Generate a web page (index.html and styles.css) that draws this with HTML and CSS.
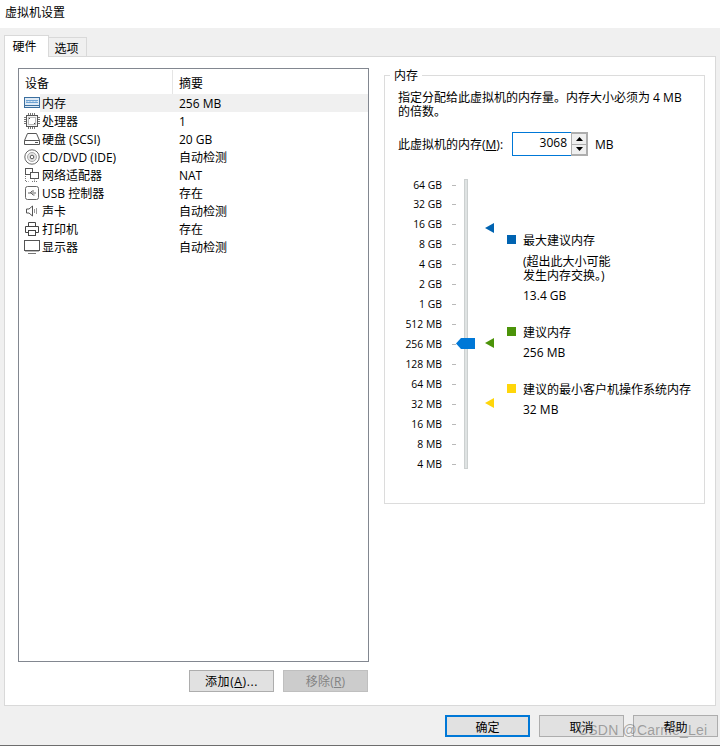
FILE: index.html
```html
<!DOCTYPE html>
<html lang="zh-CN">
<head>
<meta charset="utf-8">
<title>虚拟机设置</title>
<link rel="stylesheet" href="styles.css">
</head>
<body>
<div class="window">
  <div class="titlebar">虚拟机设置</div>
  <div class="content">
    <div class="tabs">
      <div class="tab active">硬件</div>
      <div class="tab">选项</div>
    </div>
    <div class="panel">
      <div class="left">
        <div class="list">
          <div class="list-head">
            <div class="col-a">设备</div>
            <div class="col-b">摘要</div>
          </div>
          <div class="row selected">
            <svg class="ico" viewBox="0 0 16 16"><rect x="0.500" y="2.500" width="15" height="10" fill="#dfeaf5" stroke="#3b6f9f"/><path d="M2 5.500h12M2 7.500h12" stroke="#6fa3d2"/><path d="M2 6.500h12" stroke="#b5d0ea" stroke-dasharray="2 1"/><path d="M1 10.500h14" stroke="#3b6f9f"/></svg>
            <span class="name">内存</span><span class="val">256 MB</span>
          </div>
          <div class="row">
            <svg class="ico" viewBox="0 0 16 16"><rect x="2.500" y="2.500" width="11" height="11" fill="#f4f4f4" stroke="#555"/><rect x="4.500" y="4.500" width="7" height="7" fill="#fff" stroke="#bbb"/><path d="M0 4.500h2M0 6.500h2M0 8.500h2M0 10.500h2M14 4.500h2M14 6.500h2M14 8.500h2M14 10.500h2M4.500 0v2M6.500 0v2M8.500 0v2M10.500 0v2M4.500 14v2M6.500 14v2M8.500 14v2M10.500 14v2" stroke="#777"/><path d="M5 5h1v1H5zM10 10h1v1h-1z" fill="#444"/></svg>
            <span class="name">处理器</span><span class="val">1</span>
          </div>
          <div class="row">
            <svg class="ico" viewBox="0 0 16 16"><path d="M3.500 2.500h9l3 7v4h-15v-4z" fill="#fff" stroke="#555"/><path d="M0.500 9.500h15" stroke="#555"/><path d="M11 11.500h3" stroke="#555"/></svg>
            <span class="name">硬盘 (SCSI)</span><span class="val">20 GB</span>
          </div>
          <div class="row">
            <svg class="ico" viewBox="0 0 16 16"><circle cx="8" cy="8" r="7.200" fill="#fff" stroke="#666"/><circle cx="8" cy="8" r="4.500" fill="#e4e4e4" stroke="#aaa"/><circle cx="8" cy="8" r="1.800" fill="#fff" stroke="#555"/></svg>
            <span class="name">CD/DVD (IDE)</span><span class="val">自动检测</span>
          </div>
          <div class="row">
            <svg class="ico" viewBox="0 0 16 16"><rect x="1.500" y="1.500" width="7" height="6" fill="#fff" stroke="#555"/><rect x="6.500" y="5.500" width="8" height="6" fill="#fff" stroke="#555"/><path d="M10.500 11.500v3M8 14.500h5M1.500 9v5.500h3" stroke="#777" fill="none" stroke-dasharray="1 1"/></svg>
            <span class="name">网络适配器</span><span class="val">NAT</span>
          </div>
          <div class="row">
            <svg class="ico" viewBox="0 0 16 16"><rect x="1.500" y="1.500" width="13" height="13" rx="2" fill="#fff" stroke="#666"/><path d="M4 8h8M6 8l2-2h2M7 8l2 2h1.500" stroke="#666" fill="none"/></svg>
            <span class="name">USB 控制器</span><span class="val">存在</span>
          </div>
          <div class="row">
            <svg class="ico" viewBox="0 0 16 16"><path d="M2.500 6h2.500l3.500-3v10l-3.500-3h-2.500z" fill="#fff" stroke="#555"/><path d="M10.500 6v4M12.500 5v6" stroke="#999" fill="none"/></svg>
            <span class="name">声卡</span><span class="val">自动检测</span>
          </div>
          <div class="row">
            <svg class="ico" viewBox="0 0 16 16"><path d="M4.500 5.500v-4h7v4M4.500 11.500h-3v-6h13v6h-3" fill="#fff" stroke="#444"/><rect x="4.500" y="9.500" width="7" height="5" fill="#fff" stroke="#444"/></svg>
            <span class="name">打印机</span><span class="val">存在</span>
          </div>
          <div class="row">
            <svg class="ico" viewBox="0 0 16 16"><rect x="0.500" y="1.500" width="15" height="10" fill="#fff" stroke="#555"/><path d="M4 14.500h8" stroke="#777"/><path d="M1 12.500h14" stroke="#bbb"/></svg>
            <span class="name">显示器</span><span class="val">自动检测</span>
          </div>
        </div>
        <div class="list-actions">
          <div class="btn small">添加(<u>A</u>)...</div>
          <div class="btn small disabled">移除(<u>R</u>)</div>
        </div>
      </div>
      <div class="group">
        <div class="legend">内存</div>
        <p class="desc">指定分配给此虚拟机的内存量。内存大小必须为 4 MB<br>的倍数。</p>
        <div class="mem-row">
          <span class="mem-label">此虚拟机的内存(<u>M</u>):</span>
          <div class="mem-input">3068</div>
          <div class="spin">
            <div class="spin-btn"><svg viewBox="0 0 7 4" class="arrow"><path d="M3.500 0L7 4H0z"/></svg></div>
            <div class="spin-btn"><svg viewBox="0 0 7 4" class="arrow"><path d="M0 0h7L3.500 4z"/></svg></div>
          </div>
          <span class="mem-unit">MB</span>
        </div>
        <div class="chart">
          <div class="scale">
            <div class="track"></div>
            <div class="tick-row"><span>64 GB</span><i></i></div>
            <div class="tick-row"><span>32 GB</span><i></i></div>
            <div class="tick-row"><span>16 GB</span><i></i></div>
            <div class="tick-row"><span>8 GB</span><i></i></div>
            <div class="tick-row"><span>4 GB</span><i></i></div>
            <div class="tick-row"><span>2 GB</span><i></i></div>
            <div class="tick-row"><span>1 GB</span><i></i></div>
            <div class="tick-row"><span>512 MB</span><i></i></div>
            <div class="tick-row"><span>256 MB</span><i></i></div>
            <div class="tick-row"><span>128 MB</span><i></i></div>
            <div class="tick-row"><span>64 MB</span><i></i></div>
            <div class="tick-row"><span>32 MB</span><i></i></div>
            <div class="tick-row"><span>16 MB</span><i></i></div>
            <div class="tick-row"><span>8 MB</span><i></i></div>
            <div class="tick-row"><span>4 MB</span><i></i></div>
            <svg class="thumb" viewBox="0 0 19 11"><path d="M0 5.500L5 0h14v11H5z" fill="#0078d7"/></svg>
            <svg class="mark mark-max" viewBox="0 0 9 10"><path d="M0 5L9 0v10z" fill="#0063b1"/></svg>
            <svg class="mark mark-rec" viewBox="0 0 9 10"><path d="M0 5L9 0v10z" fill="#4b9309"/></svg>
            <svg class="mark mark-min" viewBox="0 0 9 10"><path d="M0 5L9 0v10z" fill="#ffd60a"/></svg>
          </div>
          <div class="notes">
            <div class="note note-max">
              <div class="note-title"><b class="sq sq-max"></b>最大建议内存</div>
              <div class="note-sub">(超出此大小可能<br>发生内存交换。)</div>
              <div class="note-val">13.4 GB</div>
            </div>
            <div class="note note-rec">
              <div class="note-title"><b class="sq sq-rec"></b>建议内存</div>
              <div class="note-val">256 MB</div>
            </div>
            <div class="note note-min">
              <div class="note-title"><b class="sq sq-min"></b>建议的最小客户机操作系统内存</div>
              <div class="note-val">32 MB</div>
            </div>
          </div>
        </div>
      </div>
    </div>
    <div class="footer">
      <div class="btn primary">确定</div>
      <div class="btn">取消</div>
      <div class="btn">帮助</div>
    </div>
  </div>
  <div class="watermark">CSDN @Carme_Lei</div>
</div>
</body>
</html>
```
FILE: styles.css
```css
* { box-sizing: border-box; }
html, body { margin: 0; padding: 0; background: #fff; }
body {
  font-family: "Open Sans", "Noto Sans CJK SC", sans-serif;
  font-size: 12px;
  color: #000;
}
.window { position: relative; width: 720px; height: 748px; overflow: hidden; background: #fff; }
.titlebar { height: 28px; padding: 4px 0 0 5px; line-height: 17px; }
.content {
  height: 718px;
  background: #f0f0f0;
  padding: 7px 4px 0 4px;
  border-bottom: 1px solid #6d6d6d;
  display: flex;
  flex-direction: column;
}
.tabs { display: flex; height: 21px; flex: none; align-items: flex-end; position: relative; z-index: 1; }
.tab {
  width: 38px;
  height: 19px;
  padding-right: 2px;
  background: #f0f0f0;
  border: 1px solid #d9d9d9;
  border-left: 0;
  border-bottom: 0;
  text-align: center;
  line-height: 21px;
}
.tab.active {
  width: 45px;
  height: 22px;
  padding-right: 4px;
  margin-bottom: -1px;
  background: #fff;
  border-left: 1px solid #d9d9d9;
  line-height: 21px;
}
.panel {
  height: 650px;
  flex: none;
  background: #fff;
  border: 1px solid #d9d9d9;
  padding: 11px 10px 0 13px;
  display: flex;
  gap: 15px;
}
.left { width: 351px; }
.list { height: 594px; border: 1px solid #828790; padding-top: 1px; }
.list-head { display: flex; height: 24px; line-height: 28px; }
.col-a { width: 154px; padding-left: 6px; border-right: 1px solid #e5e5e5; }
.col-b { padding-left: 6px; }
.row { position: relative; display: flex; align-items: center; height: 18px; padding-left: 5px; }
.row.selected { background: linear-gradient(to right, #fff 21px, #f0f0f0 21px); }
.ico { width: 16px; height: 16px; flex: none; }
.name { width: 139px; padding-left: 2px; white-space: nowrap; }
.val { white-space: nowrap; }
.list-actions { display: flex; justify-content: flex-end; gap: 9px; padding: 8px 1px 0 0; }
.btn {
  width: 85px;
  height: 22px;
  background: #e1e1e1;
  border: 1px solid #adadad;
  text-align: center;
  line-height: 23px;
}
.btn.small { line-height: 22px; letter-spacing: 0.6px; }
.btn.disabled { background: #ccc; border-color: #bfbfbf; color: #838383; letter-spacing: 0.2px; }
.group {
  position: relative;
  width: 321px;
  height: 429px;
  margin-top: 7px;
  border: 1px solid #dcdcdc;
  padding: 15px 8px 0 13px;
}
.legend {
  position: absolute;
  left: 5px;
  top: -8px;
  padding: 0 4px;
  background: #fff;
  line-height: 16px;
}
.desc { margin: 0; line-height: 14px; }
.mem-row { display: flex; align-items: center; height: 24px; margin-top: 13px; }
.mem-label { width: 114px; }
.mem-input {
  width: 59px;
  height: 24px;
  border: 1px solid #0078d7;
  border-right: 0;
  text-align: right;
  padding-right: 4px;
  line-height: 19px;
}
.spin { width: 17px; height: 24px; border: 1px solid #adadad; display: flex; flex-direction: column; border-width: 2px 2px 2px 1px; }
.spin-btn { flex: 1; background: #efefef; border-bottom: 1px solid #adadad; display: flex; align-items: center; justify-content: center; }
.spin-btn:last-child { border-bottom: 0; }
.arrow { width: 7px; height: 4px; fill: #000; }
.mem-unit { margin-left: 7px; }
.chart { display: flex; margin-top: 19px; }
.scale { position: relative; width: 108px; margin-left: -13px; }
.tick-row { display: flex; align-items: center; height: 20px; }
.tick-row:nth-child(2) { height: 19px; padding-top: 1px; }
.tick-row span { width: 57px; text-align: right; font-size: 10.4px; }
.tick-row i { width: 4px; height: 1px; margin-left: 10px; background: #b9b9b9; }
.track { position: absolute; left: 79px; top: 4px; width: 4px; height: 290px; background: #dfe3e3; border: 1px solid #ccd0d0; }
.thumb { position: absolute; left: 71px; top: 163px; width: 19px; height: 11px; }
.mark { position: absolute; left: 100px; width: 9px; height: 10px; }
.mark-max { top: 48px; }
.mark-rec { top: 163px; }
.mark-min { top: 223px; }
.notes { margin-left: 30px; }
.note { line-height: 14px; position: relative; }
.note-max { padding-top: 59px; }
.note-rec { padding-top: 23px; }
.note-min { padding-top: 23px; }
.sq { position: absolute; left: -16px; width: 9px; height: 9px; margin-top: 1px; }
.sq-max { background: #0063b1; }
.sq-rec { background: #4b9309; }
.sq-min { background: #ffd60a; }
.note-title { white-space: nowrap; }
.note-sub { margin-top: 7px; }
.note-val { margin-top: 6px; }
.footer { display: flex; justify-content: flex-end; gap: 9px; padding-top: 9px; margin-right: -2px; }
.btn.primary { border: 2px solid #0078d7; line-height: 21px; }
.watermark {
  position: absolute;
  left: 578px;
  top: 721px;
  font-family: "Liberation Sans", sans-serif;
  font-size: 14px;
  letter-spacing: 0.2px;
  line-height: 18px;
  color: rgba(90, 90, 90, 0.5);
  white-space: nowrap;
}
```
